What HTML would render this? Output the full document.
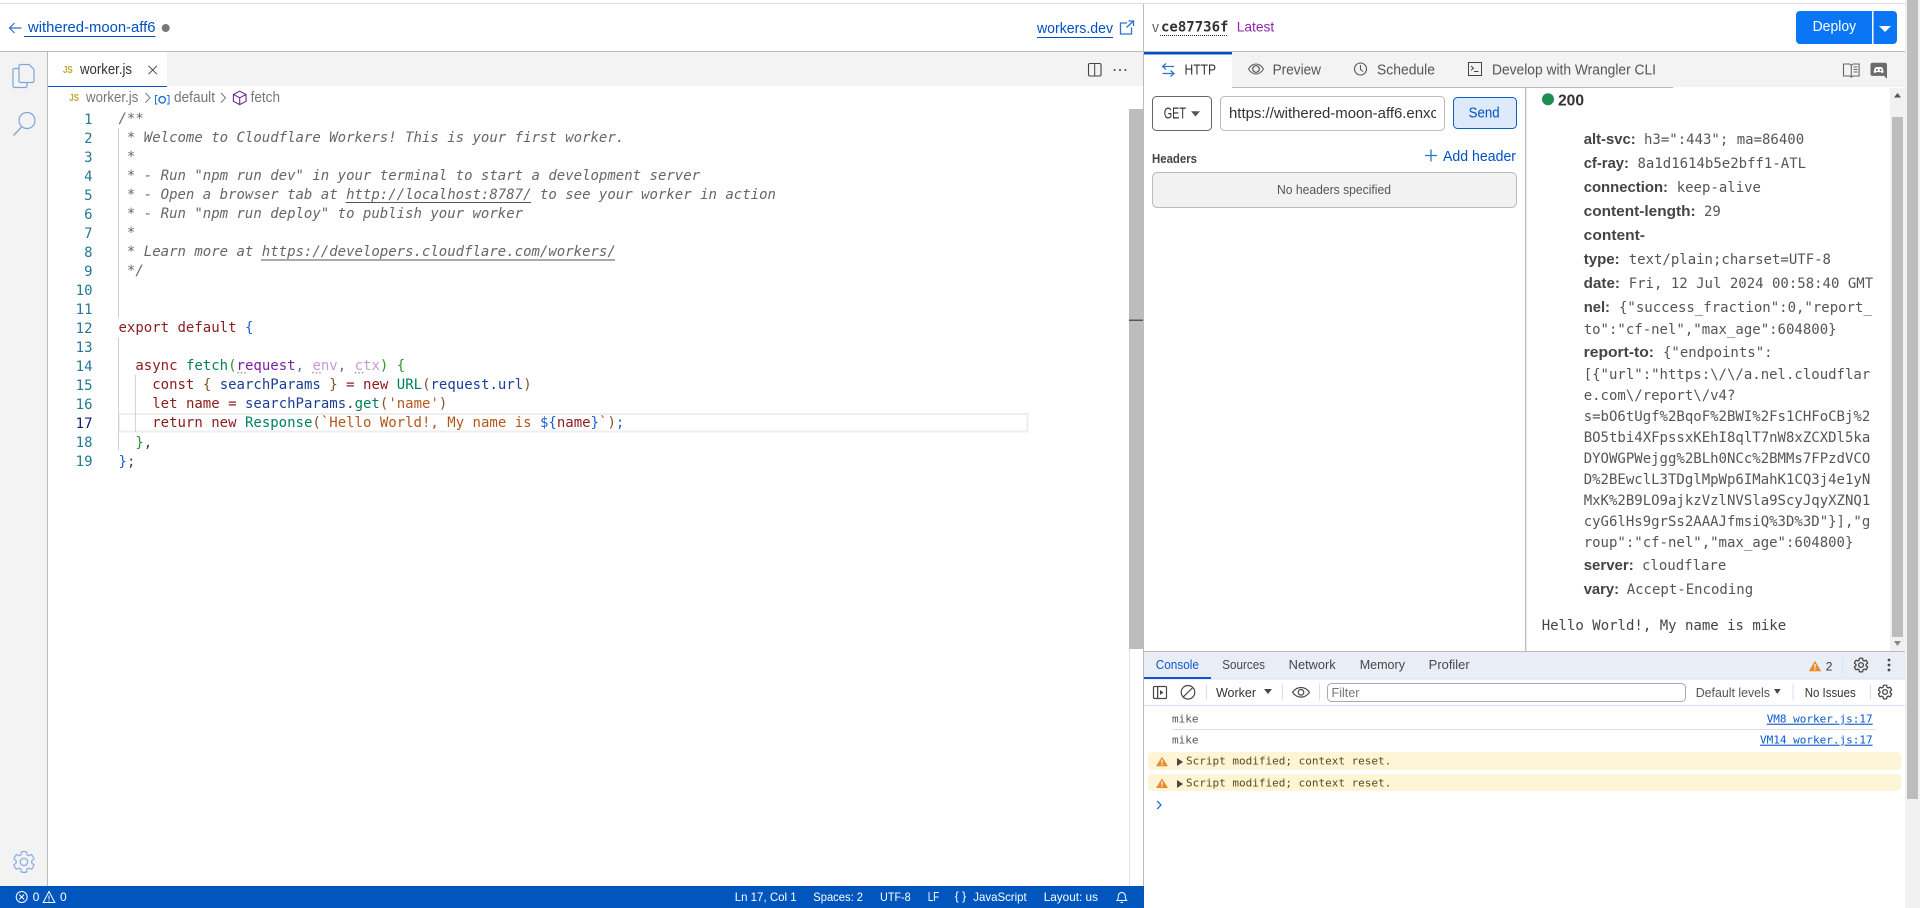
<!DOCTYPE html>
<html lang="en">
<head>
<meta charset="utf-8">
<title>withered-moon-aff6</title>
<style>
html,body{margin:0;padding:0;background:#fff;width:1920px;height:908px;overflow:hidden}
svg{display:block}
text{white-space:pre}
.s{font-family:"Liberation Sans",sans-serif}
.m{font-family:"DejaVu Sans Mono","Liberation Mono",monospace;font-size:14px}
.c{fill:#666;font-style:italic}
.n{fill:#237893;text-anchor:end}
.k{fill:#8a1c1c}.g{fill:#00805a}.b{fill:#1a3f94}.o{fill:#b5561c}.y{fill:#7a5a2a}.l{fill:#1a5fd8}.h{fill:#319331}
.lab{font-family:"Liberation Sans",sans-serif;font-weight:700;font-size:15px;fill:#444}
.val{fill:#555}
.t{font-family:"DejaVu Sans Mono","Liberation Mono",monospace;font-size:11px}
</style>
</head>
<body>
<svg width="1920" height="908" viewBox="0 0 1920 908" xmlns="http://www.w3.org/2000/svg">
<defs>
<path id="gear" d="M19.14 12.94c.04-.3.06-.61.06-.94 0-.32-.02-.64-.07-.94l2.03-1.58a.49.49 0 0 0 .12-.61l-1.92-3.32a.488.488 0 0 0-.59-.22l-2.39.96c-.5-.38-1.03-.7-1.62-.94l-.36-2.54a.484.484 0 0 0-.48-.41h-3.84c-.24 0-.43.17-.47.41l-.36 2.54c-.59.24-1.13.57-1.62.94l-2.39-.96c-.22-.08-.47 0-.59.22L2.74 8.87c-.12.21-.08.47.12.61l2.03 1.58c-.05.3-.09.63-.09.94s.02.64.07.94l-2.03 1.58a.49.49 0 0 0-.12.61l1.92 3.32c.12.22.37.29.59.22l2.39-.96c.5.38 1.03.7 1.62.94l.36 2.54c.05.24.24.41.48.41h3.84c.24 0 .44-.17.47-.41l.36-2.54c.59-.24 1.13-.56 1.62-.94l2.39.96c.22.08.47 0 .59-.22l1.92-3.32c.12-.22.07-.47-.12-.61l-2.01-1.58zM12 15.4a3.4 3.4 0 1 1 0-6.8 3.4 3.4 0 0 1 0 6.8z"/>
</defs>

<!-- page scrollbar -->
<rect x="1905" y="0" width="15" height="908" fill="#f1f1f1"/>
<rect x="1907" y="0" width="11" height="799" fill="#bdbdbd"/>

<!-- top lines -->
<rect x="0" y="3" width="1906" height="1" fill="#ddd"/>
<rect x="0" y="51" width="1905" height="1" fill="#bbb"/>
<rect x="1143" y="4" width="1" height="882" fill="#bbb"/>

<!-- header left -->
<path d="M21.6 28H9.6M14.5 23l-5 5 5 5" fill="none" stroke="#2b73cf" stroke-width="1.2"/>
<text class="s" x="28" y="32" font-size="15" fill="#0051c3" textLength="127.5" lengthAdjust="spacingAndGlyphs">withered-moon-aff6</text>
<rect x="24" y="36" width="131.5" height="1" fill="#0051c3"/>
<circle cx="165.7" cy="28" r="4" fill="#777"/>
<text class="s" x="1037" y="33" font-size="15" fill="#0051c3" textLength="76" lengthAdjust="spacingAndGlyphs">workers.dev</text>
<rect x="1037" y="37" width="76" height="1" fill="#0051c3"/>
<path d="M1127 23h-6.5v11h11v-6.5M1126.5 27.5l7-6.5M1128.5 21h5v5" fill="none" stroke="#2b73cf" stroke-width="1.3"/>

<!-- header right -->
<text class="s" x="1152" y="32" font-size="15" fill="#666" textLength="7" lengthAdjust="spacingAndGlyphs">v</text>
<text class="m" x="1161" y="31.500" font-weight="700" fill="#333">ce87736f</text>
<line x1="1160" y1="35.5" x2="1227" y2="35.5" stroke="#333" stroke-width="1" stroke-dasharray="1 1"/>
<text class="s" x="1236.7" y="31.500" font-size="14" fill="#8e24aa" textLength="37.5" lengthAdjust="spacingAndGlyphs">Latest</text>
<path d="M1800 11h72v33h-72a4 4 0 0 1-4-4V15a4 4 0 0 1 4-4z" fill="#0a75f5"/>
<path d="M1873.5 11H1893a4 4 0 0 1 4 4v25a4 4 0 0 1-4 4h-19.5z" fill="#0a75f5"/>
<text class="s" x="1812.6" y="31" font-size="15" fill="#fff" textLength="43.5" lengthAdjust="spacingAndGlyphs">Deploy</text>
<polygon points="1879,26 1891,26 1885,32" fill="#fff"/>

<!-- sidebar -->
<rect x="0" y="52" width="47" height="834" fill="#f3f3f3"/>
<rect x="47" y="52" width="1" height="834" fill="#bbb"/>
<g fill="none" stroke="#7ea6dc" stroke-width="1.2">
<path d="M19 68.5h-4.5a1.5 1.5 0 0 0-1.5 1.5v16a1.5 1.5 0 0 0 1.5 1.5h11a1.5 1.5 0 0 0 1.5-1.5v-3"/>
<path d="M19 66a1.5 1.5 0 0 1 1.5-1.5H29l5 5v11.500a1.500 1.500 0 0 1-1.500 1.500h-12a1.500 1.500 0 0 1-1.500-1.500z"/>
<circle cx="27" cy="120.500" r="8"/>
<path d="M21.500 127L13.500 135.500" stroke-width="1.400"/>
</g>
<g transform="translate(11,849) scale(1.08)"><use href="#gear" fill="none" stroke="#8fb3e0" stroke-width="1.200"/></g>

<!-- editor tabs -->
<rect x="48" y="52" width="1095" height="34" fill="#f3f3f3"/>
<rect x="48" y="52" width="119" height="35" fill="#fff"/>
<rect x="48" y="86" width="119" height="1" fill="#0051c3"/>
<text class="s" x="63" y="73" font-size="10" font-weight="700" fill="#c1a52f" textLength="9.700" lengthAdjust="spacingAndGlyphs">JS</text>
<text class="s" x="80" y="74" font-size="15" fill="#333" textLength="52" lengthAdjust="spacingAndGlyphs">worker.js</text>
<path d="M148.500 65.800l8.400 8.400M156.900 65.800l-8.400 8.400" stroke="#444" stroke-width="1"/>
<rect x="1088.500" y="63.500" width="12.500" height="12.500" rx="1.500" fill="none" stroke="#444" stroke-width="1.100"/>
<rect x="1094.200" y="63.500" width="1" height="12.500" fill="#444"/>
<g fill="#444"><circle cx="1114.500" cy="70" r="1"/><circle cx="1120" cy="70" r="1"/><circle cx="1125.500" cy="70" r="1"/></g>

<!-- breadcrumbs -->
<text class="s" x="69.400" y="101" font-size="10" font-weight="700" fill="#c1a52f" textLength="9.500" lengthAdjust="spacingAndGlyphs">JS</text>
<text class="s" x="86" y="102" font-size="15" fill="#777" textLength="52.400" lengthAdjust="spacingAndGlyphs">worker.js</text>
<path d="M145.500 93l4.500 4.800-4.500 4.800" fill="none" stroke="#777"/>
<path d="M157.500 95.500h-2v8.500h2M167 95.500h2v8.500h-2" fill="none" stroke="#1a6fd0" stroke-width="1"/>
<circle cx="162.200" cy="99.800" r="3.200" fill="none" stroke="#1a6fd0" stroke-width="1.400"/>
<text class="s" x="174" y="102" font-size="15" fill="#777" textLength="41" lengthAdjust="spacingAndGlyphs">default</text>
<path d="M221 93l4.500 4.800-4.500 4.800" fill="none" stroke="#777"/>
<path d="M239.700 91.200l6.300 3.300v6.800l-6.300 3.300-6.300-3.300v-6.800zM233.400 94.500l6.300 3.300 6.300-3.300M239.700 97.800v7" fill="none" stroke="#652d90" stroke-width="1.100"/>
<text class="s" x="250.600" y="102" font-size="15" fill="#777" textLength="29.400" lengthAdjust="spacingAndGlyphs">fetch</text>

<!-- line 17 highlight + indent guides -->
<rect x="119" y="414" width="908.500" height="17.500" fill="none" stroke="#eeeeee" stroke-width="2"/>
<rect x="118" y="128" width="1" height="190" fill="#d3d3d3"/>
<rect x="118" y="337" width="1" height="114" fill="#d3d3d3"/>
<rect x="135" y="375" width="1" height="57" fill="#d3d3d3"/>

<!-- line numbers -->
<g class="m">
<text class="m n" x="92.500" y="124">1</text>
<text class="m n" x="92.500" y="143">2</text>
<text class="m n" x="92.500" y="162">3</text>
<text class="m n" x="92.500" y="181">4</text>
<text class="m n" x="92.500" y="200">5</text>
<text class="m n" x="92.500" y="219">6</text>
<text class="m n" x="92.500" y="238">7</text>
<text class="m n" x="92.500" y="257">8</text>
<text class="m n" x="92.500" y="276">9</text>
<text class="m n" x="92.500" y="295">10</text>
<text class="m n" x="92.500" y="314">11</text>
<text class="m n" x="92.500" y="333">12</text>
<text class="m n" x="92.500" y="352">13</text>
<text class="m n" x="92.500" y="371">14</text>
<text class="m n" x="92.500" y="390">15</text>
<text class="m n" x="92.500" y="409">16</text>
<text class="m n" x="92.500" y="428" style="fill:#0b216f">17</text>
<text class="m n" x="92.500" y="447">18</text>
<text class="m n" x="92.500" y="466">19</text>
</g>

<!-- code -->
<text class="m c" x="118.500" y="123">/**</text>
<text class="m c" x="118.500" y="142"> * Welcome to Cloudflare Workers! This is your first worker.</text>
<text class="m c" x="118.500" y="161"> *</text>
<text class="m c" x="118.500" y="180"> * - Run "npm run dev" in your terminal to start a development server</text>
<text class="m c" x="118.500" y="199"> * - Open a browser tab at http://localhost:8787/ to see your worker in action</text>
<rect x="345.500" y="202" width="185.500" height="1" fill="#555"/>
<text class="m c" x="118.500" y="218"> * - Run "npm run deploy" to publish your worker</text>
<text class="m c" x="118.500" y="237"> *</text>
<text class="m c" x="118.500" y="256"> * Learn more at https://developers.cloudflare.com/workers/</text>
<rect x="261" y="259.500" width="354" height="1" fill="#555"/>
<text class="m c" x="118.500" y="275"> */</text>

<text class="m k" x="118.500" y="332">export default <tspan class="l">{</tspan></text>
<text class="m" x="118.500" y="370">  <tspan class="k">async</tspan> <tspan class="g">fetch</tspan><tspan class="h">(</tspan><tspan fill="#7b1fa2">request</tspan><tspan fill="#5a7a8a">,</tspan> <tspan fill="#c79ad6">env</tspan><tspan fill="#5a7a8a">,</tspan> <tspan fill="#c79ad6">ctx</tspan><tspan class="h">)</tspan> <tspan class="h">{</tspan></text>
<g fill="#777">
<circle cx="238" cy="372.800" r=".7"/><circle cx="241.500" cy="372.800" r=".7"/><circle cx="245" cy="372.800" r=".7"/>
<circle cx="313" cy="372.800" r=".7"/><circle cx="316.500" cy="372.800" r=".7"/><circle cx="320" cy="372.800" r=".7"/>
<circle cx="355.500" cy="372.800" r=".7"/><circle cx="359" cy="372.800" r=".7"/><circle cx="362.500" cy="372.800" r=".7"/>
</g>
<text class="m" x="118.500" y="389">    <tspan class="k">const</tspan> <tspan class="y">{</tspan> <tspan class="b">searchParams</tspan> <tspan class="y">}</tspan> <tspan class="k">=</tspan> <tspan class="k">new</tspan> <tspan class="g">URL</tspan><tspan class="y">(</tspan><tspan class="b">request.url</tspan><tspan class="y">)</tspan></text>
<text class="m" x="118.500" y="408">    <tspan class="k">let</tspan> <tspan class="k">name</tspan> <tspan class="k">=</tspan> <tspan class="b">searchParams</tspan><tspan class="b">.</tspan><tspan class="g">get</tspan><tspan class="y">(</tspan><tspan class="o">'name'</tspan><tspan class="y">)</tspan></text>
<text class="m" x="118.500" y="427">    <tspan class="k">return</tspan> <tspan class="k">new</tspan> <tspan class="g">Response</tspan><tspan class="y">(</tspan><tspan class="o">`Hello World!, My name is </tspan><tspan class="l">${</tspan><tspan class="k">name</tspan><tspan class="l">}</tspan><tspan class="o">`</tspan><tspan class="y">)</tspan><tspan class="l">;</tspan></text>
<text class="m" x="118.500" y="447">  <tspan class="h">}</tspan><tspan fill="#444">,</tspan></text>
<text class="m" x="118.500" y="466"><tspan class="l">}</tspan><tspan fill="#444">;</tspan></text>

<!-- editor scrollbar -->
<rect x="1129" y="109" width="1" height="777" fill="#e3e3e3"/>
<rect x="1129" y="109" width="14" height="540" fill="#bdbdbd"/>
<rect x="1129" y="319.500" width="14" height="1.500" fill="#555"/>

<!-- status bar -->
<rect x="0" y="886" width="1144" height="22" fill="#0056bd"/>
<g fill="none" stroke="#fff" stroke-width="1">
<circle cx="21.700" cy="897" r="5.500"/>
<path d="M19.300 894.600l4.800 4.800M24.100 894.600l-4.800 4.800"/>
<path d="M49 891.500l5.800 11h-11.600zM49 895.500v4M49 900.500v1"/>
<path d="M1117 900.500c1-1 1.300-2 1.300-4.500a3.500 3.500 0 0 1 7 0c0 2.500.3 3.500 1.300 4.500zM1120.500 902.500h2.600"/>
</g>
<g class="s" font-size="12" fill="#fff">
<text x="32.700" y="901">0</text>
<text x="60" y="901">0</text>
<text x="734.700" y="901" textLength="62" lengthAdjust="spacingAndGlyphs">Ln 17, Col 1</text>
<text x="813.300" y="901" textLength="49.700" lengthAdjust="spacingAndGlyphs">Spaces: 2</text>
<text x="880" y="901" textLength="30.700" lengthAdjust="spacingAndGlyphs">UTF-8</text>
<text x="927.700" y="901" font-size="13" textLength="11.500" lengthAdjust="spacingAndGlyphs">LF</text>
<text x="954.700" y="900" textLength="11.500" lengthAdjust="spacing">{}</text>
<text x="973.300" y="901" textLength="53.400" lengthAdjust="spacingAndGlyphs">JavaScript</text>
<text x="1043.700" y="901" textLength="54.300" lengthAdjust="spacingAndGlyphs">Layout: us</text>
</g>

<!-- right tabs -->
<rect x="1144" y="52" width="761" height="35" fill="#f3f3f3"/>
<rect x="1144" y="52" width="88" height="36" fill="#fff"/>
<rect x="1144" y="52" width="88" height="2.500" fill="#0051c3"/>
<rect x="1232" y="87" width="441" height="1" fill="#bbb"/>
<path d="M1174 66.500h-11.500M1166 63.500l-3.500 3 3.500 3M1162.500 73.500h11.500M1170.500 70.500l3.500 3-3.500 3" fill="none" stroke="#2b73cf" stroke-width="1.200"/>
<text class="s" x="1184.500" y="74.500" font-size="14.500" fill="#333" textLength="31.500" lengthAdjust="spacingAndGlyphs">HTTP</text>
<path d="M1248.500 69c2-3.400 4.600-5 7.500-5s5.500 1.600 7.500 5c-2 3.400-4.600 5-7.500 5s-5.500-1.600-7.500-5z" fill="none" stroke="#555" stroke-width="1"/>
<circle cx="1256" cy="69" r="3.300" fill="none" stroke="#555" stroke-width="1.200"/>
<text class="s" x="1272.600" y="74.500" font-size="14.500" fill="#555" textLength="48.400" lengthAdjust="spacingAndGlyphs">Preview</text>
<circle cx="1360.500" cy="69" r="6" fill="none" stroke="#555" stroke-width="1.100"/>
<path d="M1360.500 65v4.500l2.500 2" fill="none" stroke="#555" stroke-width="1.100"/>
<text class="s" x="1377" y="74.500" font-size="14.500" fill="#555" textLength="58" lengthAdjust="spacingAndGlyphs">Schedule</text>
<rect x="1468.500" y="62.500" width="13" height="13" fill="none" stroke="#444" stroke-width="1"/>
<path d="M1471 66l2.500 2.200-2.500 2.200M1474 71.500h4.500" fill="none" stroke="#444" stroke-width="1"/>
<text class="s" x="1492" y="74.500" font-size="14.500" fill="#555" textLength="164" lengthAdjust="spacingAndGlyphs">Develop with Wrangler CLI</text>
<path d="M1851.300 64.500v12.500M1851.300 65.500l-1.800-1.500h-6v12h6l1.800 1 1.800-1h6v-12h-6z" fill="none" stroke="#666" stroke-width="1.100"/>
<path d="M1853.500 67h4M1853.500 69.500h4M1853.500 72h4" stroke="#666" stroke-width="1"/>
<path d="M1872.500 62.700h12.500a2 2 0 0 1 2 2v14l-3-2.800h-11.500a2 2 0 0 1-2-2v-9.200a2 2 0 0 1 2-2z" fill="#6b6b6b"/>
<path d="M1875 67.500q3.800-1 7.500 0l1.200 4.800-2 .8-.7-1h-4.800l-.7 1-2-.8z" fill="#fff"/>
<circle cx="1876.900" cy="70" r="1" fill="#6b6b6b"/><circle cx="1880.600" cy="70" r="1" fill="#6b6b6b"/>

<!-- request -->
<rect x="1152.500" y="96.500" width="59" height="34" rx="4" fill="#fff" stroke="#666"/>
<text class="s" x="1163.700" y="118.500" font-size="15.500" fill="#333" textLength="22.300" lengthAdjust="spacingAndGlyphs">GET</text>
<polygon points="1191,111.200 1200,111.200 1195.500,116.500" fill="#555"/>
<rect x="1220.500" y="96.500" width="224" height="34" rx="4" fill="#fff" stroke="#bbb"/>
<svg x="1229" y="98" width="207" height="30" viewBox="0 0 207 30"><text class="s" x="0" y="20" font-size="14.500" fill="#333" textLength="209" lengthAdjust="spacingAndGlyphs">https://withered-moon-aff6.enxc</text></svg>
<rect x="1453.500" y="97.500" width="63" height="31" rx="4" fill="#dceafc" stroke="#0a5fc8"/>
<text class="s" x="1468.600" y="117.500" font-size="14.500" fill="#0051c3" textLength="31" lengthAdjust="spacingAndGlyphs">Send</text>
<text class="s" x="1152" y="163" font-size="13" font-weight="700" fill="#444" textLength="45" lengthAdjust="spacingAndGlyphs">Headers</text>
<path d="M1431 149.500v12M1425 155.500h12" stroke="#2b73cf" stroke-width="1.300"/>
<text class="s" x="1443" y="161" font-size="14.500" fill="#0051c3" textLength="73" lengthAdjust="spacingAndGlyphs">Add header</text>
<rect x="1152.500" y="172.500" width="364" height="35" rx="5" fill="#f2f2f2" stroke="#bbb"/>
<text class="s" x="1277" y="194" font-size="12.500" fill="#555" textLength="114" lengthAdjust="spacingAndGlyphs">No headers specified</text>
<rect x="1525" y="88" width="1.300" height="563" fill="#bbb"/>

<!-- response -->
<circle cx="1548" cy="99.300" r="6" fill="#1e8e50"/>
<text class="s" x="1558" y="105.700" font-size="15.500" font-weight="700" fill="#333" textLength="26" lengthAdjust="spacingAndGlyphs">200</text>

<text class="lab" x="1583.700" y="144" textLength="52" lengthAdjust="spacingAndGlyphs">alt-svc:</text>
<text class="m val" x="1644" y="144">h3=":443"; ma=86400</text>
<text class="lab" x="1583.700" y="168" textLength="45.300" lengthAdjust="spacingAndGlyphs">cf-ray:</text>
<text class="m val" x="1637.500" y="168">8a1d1614b5e2bff1-ATL</text>
<text class="lab" x="1583.700" y="192" textLength="84.300" lengthAdjust="spacingAndGlyphs">connection:</text>
<text class="m val" x="1676.700" y="192">keep-alive</text>
<text class="lab" x="1583.700" y="216" textLength="112" lengthAdjust="spacingAndGlyphs">content-length:</text>
<text class="m val" x="1704" y="216">29</text>
<text class="lab" x="1583.700" y="240" textLength="61.300" lengthAdjust="spacingAndGlyphs">content-</text>
<text class="lab" x="1583.700" y="264" textLength="36" lengthAdjust="spacingAndGlyphs">type:</text>
<text class="m val" x="1628.700" y="264">text/plain;charset=UTF-8</text>
<text class="lab" x="1583.700" y="288" textLength="36.300" lengthAdjust="spacingAndGlyphs">date:</text>
<text class="m val" x="1628.700" y="288">Fri, 12 Jul 2024 00:58:40 GMT</text>
<text class="lab" x="1583.700" y="312" textLength="26.300" lengthAdjust="spacingAndGlyphs">nel:</text>
<text class="m val" x="1619" y="312">{"success_fraction":0,"report_</text>
<text class="m val" x="1583.700" y="334">to":"cf-nel","max_age":604800}</text>
<text class="lab" x="1583.700" y="357" textLength="70.300" lengthAdjust="spacingAndGlyphs">report-to:</text>
<text class="m val" x="1663" y="357">{"endpoints":</text>
<text class="m val" x="1583.700" y="379">[{"url":"https:\/\/a.nel.cloudflar</text>
<text class="m val" x="1583.700" y="400">e.com\/report\/v4?</text>
<text class="m val" x="1583.700" y="421">s=bO6tUgf%2BqoF%2BWI%2Fs1CHFoCBj%2</text>
<text class="m val" x="1583.700" y="442">BO5tbi4XFpssxKEhI8qlT7nW8xZCXDl5ka</text>
<text class="m val" x="1583.700" y="463">DYOWGPWejgg%2BLh0NCc%2BMMs7FPzdVCO</text>
<text class="m val" x="1583.700" y="484">D%2BEwclL3TDglMpWp6IMahK1CQ3j4e1yN</text>
<text class="m val" x="1583.700" y="505">MxK%2B9LO9ajkzVzlNVSla9ScyJqyXZNQ1</text>
<text class="m val" x="1583.700" y="526">cyG6lHs9grSs2AAAJfmsiQ%3D%3D"}],"g</text>
<text class="m val" x="1583.700" y="547">roup":"cf-nel","max_age":604800}</text>
<text class="lab" x="1583.700" y="570" textLength="50" lengthAdjust="spacingAndGlyphs">server:</text>
<text class="m val" x="1642" y="570">cloudflare</text>
<text class="lab" x="1583.700" y="594" textLength="35.300" lengthAdjust="spacingAndGlyphs">vary:</text>
<text class="m val" x="1626.700" y="594">Accept-Encoding</text>
<text class="m" x="1541.700" y="630" fill="#444">Hello World!, My name is mike</text>

<!-- response scrollbar -->
<rect x="1890" y="88" width="15" height="563" fill="#f1f1f1"/>
<rect x="1892" y="117" width="11" height="520" fill="#bdbdbd"/>
<polygon points="1897.500,93 1901,97.500 1894,97.500" fill="#555"/>
<polygon points="1897.500,646 1901,641 1894,641" fill="#888"/>

<!-- console tabs -->
<rect x="1144" y="651" width="761" height="1" fill="#bbb"/>
<rect x="1144" y="652" width="761" height="27" fill="#e9eef6"/>
<rect x="1144" y="678.500" width="761" height="1" fill="#d3e3fd"/>
<rect x="1144" y="677" width="67" height="2" fill="#0b57d0"/>
<g class="s" font-size="12.500" fill="#474747">
<text x="1155.700" y="669" fill="#0b57d0" textLength="43.300" lengthAdjust="spacingAndGlyphs">Console</text>
<text x="1222.300" y="669" textLength="42.700" lengthAdjust="spacingAndGlyphs">Sources</text>
<text x="1288.700" y="669" textLength="47" lengthAdjust="spacingAndGlyphs">Network</text>
<text x="1359.700" y="669" textLength="45.300" lengthAdjust="spacingAndGlyphs">Memory</text>
<text x="1428.700" y="669" textLength="41" lengthAdjust="spacingAndGlyphs">Profiler</text>
</g>
<path d="M1815 660.800l6.200 10.400h-12.400z" fill="#ea8a2c"/>
<rect x="1814.400" y="664" width="1.200" height="3.800" fill="#fff"/><rect x="1814.400" y="668.500" width="1.200" height="1.300" fill="#fff"/>
<text class="s" x="1825.700" y="670.500" font-size="12" fill="#333">2</text>
<rect x="1842" y="657" width="1" height="16" fill="#d3e3fd"/>
<g transform="translate(1852.500,656.500) scale(.71)"><use href="#gear" fill="none" stroke="#474747" stroke-width="1.800"/></g>
<g fill="#474747"><circle cx="1889" cy="660" r="1.400"/><circle cx="1889" cy="665" r="1.400"/><circle cx="1889" cy="670" r="1.400"/></g>

<!-- console toolbar -->
<rect x="1144" y="705" width="761" height="1" fill="#d3e3fd"/>
<rect x="1153.500" y="686.500" width="13" height="12" rx="1" fill="none" stroke="#474747" stroke-width="1.200"/>
<rect x="1157" y="686.500" width="1.300" height="12" fill="#474747"/>
<polygon points="1160,690 1163.500,692.500 1160,695" fill="#474747"/>
<circle cx="1188" cy="692.300" r="6.800" fill="none" stroke="#474747" stroke-width="1.200"/>
<path d="M1183.200 697l9.600-9.500" stroke="#474747" stroke-width="1.200"/>
<rect x="1206" y="684" width="1" height="16" fill="#d3e3fd"/>
<text class="s" x="1216" y="697" font-size="12.500" fill="#333" textLength="40" lengthAdjust="spacingAndGlyphs">Worker</text>
<polygon points="1264,689 1272,689 1268,694" fill="#474747"/>
<rect x="1282" y="684" width="1" height="16" fill="#d3e3fd"/>
<path d="M1292.500 692.300c2.400-3.300 5.200-4.800 8.500-4.800s6.100 1.500 8.500 4.800c-2.400 3.300-5.200 4.800-8.500 4.800s-6.100-1.500-8.500-4.800z" fill="none" stroke="#474747" stroke-width="1.200"/>
<circle cx="1301" cy="692.300" r="2.800" fill="none" stroke="#474747" stroke-width="1.200"/>
<rect x="1319" y="684" width="1" height="16" fill="#d3e3fd"/>
<rect x="1327.500" y="683.500" width="358" height="18" rx="4" fill="#fff" stroke="#aaa"/>
<text class="s" x="1331.500" y="697" font-size="12.500" fill="#777" textLength="28" lengthAdjust="spacingAndGlyphs">Filter</text>
<text class="s" x="1695.700" y="697" font-size="12.500" fill="#555" textLength="74.300" lengthAdjust="spacingAndGlyphs">Default levels</text>
<polygon points="1774,689 1780.700,689 1777.300,694" fill="#474747"/>
<rect x="1792.500" y="684" width="1" height="16" fill="#d3e3fd"/>
<text class="s" x="1804.700" y="697" font-size="12.500" fill="#333" textLength="51" lengthAdjust="spacingAndGlyphs">No Issues</text>
<rect x="1870" y="684" width="1" height="16" fill="#d3e3fd"/>
<g transform="translate(1876.500,683.500) scale(.71)"><use href="#gear" fill="none" stroke="#474747" stroke-width="1.800"/></g>

<!-- console logs -->
<text class="t" x="1172" y="722.700" fill="#555">mike</text>
<rect x="1172" y="729" width="704" height="1" fill="#d8e0ee"/>
<text class="t" x="1172" y="743.700" fill="#555">mike</text>
<text class="t" x="1766.700" y="722.700" fill="#0b57d0" text-decoration="underline">VM8 worker.js:17</text>
<text class="t" x="1760" y="743.700" fill="#0b57d0" text-decoration="underline">VM14 worker.js:17</text>

<rect x="1148" y="752" width="753" height="18" rx="4" fill="#fef5d7"/>
<rect x="1148" y="774" width="753" height="17" rx="4" fill="#fef5d7"/>
<path d="M1162 756.700l6 9.500h-12z" fill="#ea8a2c"/>
<rect x="1161.400" y="759.500" width="1.200" height="3.700" fill="#fff"/><rect x="1161.400" y="764" width="1.200" height="1.200" fill="#fff"/>
<path d="M1162 778.500l6 9.500h-12z" fill="#ea8a2c"/>
<rect x="1161.400" y="781.300" width="1.200" height="3.700" fill="#fff"/><rect x="1161.400" y="785.800" width="1.200" height="1.200" fill="#fff"/>
<polygon points="1177,758 1183,762 1177,766" fill="#474747"/>
<polygon points="1177,780 1183,784 1177,788" fill="#474747"/>
<text class="t" x="1186" y="764.700" fill="#5c4a14">Script modified; context reset.</text>
<text class="t" x="1186" y="786.700" fill="#5c4a14">Script modified; context reset.</text>
<path d="M1157.200 801l3.800 4-3.800 4" fill="none" stroke="#1a73e8" stroke-width="1.300"/>
</svg>
</body>
</html>
